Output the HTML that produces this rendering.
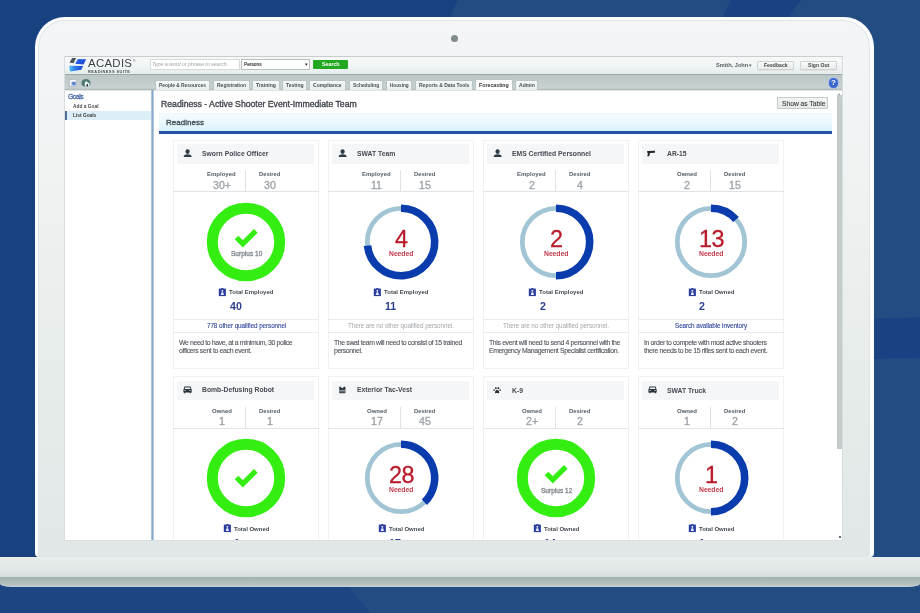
<!DOCTYPE html>
<html><head><meta charset="utf-8"><style>
html,body{margin:0;padding:0;}
body{width:920px;height:613px;position:relative;overflow:hidden;background:#17417f;font-family:"Liberation Sans",sans-serif;}
.r{position:absolute;}
.t{position:absolute;white-space:nowrap;line-height:20px;will-change:transform;}
svg{display:block;}
</style></head><body>
<svg class="r" style="left:0;top:0" width="920" height="613" viewBox="0 0 920 613">
<rect width="920" height="613" fill="#17417f"/>
<polygon points="458,0 920,0 920,613 360,613 330,560 450,17" fill="#234c83"/>
<polygon points="731,0 801,0 789,17 723,17" fill="#1a4282"/>
<polygon points="873,319 920,317 920,358 873,359" fill="#1a4282"/>
<polygon points="0,587 349,587 370,613 0,613" fill="#1c4582"/>
</svg>
<div class="r" style="left:35px;top:16.5px;width:838.8px;height:540.5px;border-radius:30px 30px 4px 4px;background:#fbfdfe;"></div>
<div class="r" style="left:38.2px;top:19.5px;width:832.2px;height:537.5px;border-radius:27px 27px 2px 2px;background:#e0e5e5;"></div>
<div class="r" style="left:39.4px;top:20.6px;width:829.8px;height:536.4px;border-radius:26px 26px 2px 2px;background:linear-gradient(#f3f5f6,#f1f4f4 18%,#e9eeec 55%,#e3e9e8 88%,#e1e7e6);"></div>
<div class="r" style="left:450.8px;top:34.7px;width:7.2px;height:7.2px;border-radius:50%;background:#7f8b8c;"></div>
<div class="r" style="left:0;top:557px;width:920px;height:30px;border-radius:0 0 12px 12px / 0 0 3px 3px;background:linear-gradient(#e8edec,#e0e6e5 45%,#d4dbda 66%,#a3b1b0 67%,#b6c3c3 92%,#c6d2d5 100%);"></div>
<div class="r" style="left:63.5px;top:55.5px;width:779.3px;height:485.29999999999995px;background:#d8dddd;"></div>
<div class="r" style="left:64.5px;top:56px;width:777.5px;height:484px;background:#ffffff;"></div>
<div class="r" style="left:64.5px;top:56px;width:777.5px;height:18px;background:linear-gradient(#f6f8f8,#f2f5f6 50%,#e5ebeb);border-top:1px solid #c9cdcd;box-sizing:border-box;"></div>
<div class="r" style="left:64.5px;top:74px;width:777.5px;height:15.700000000000003px;background:linear-gradient(#9ca8a8 0px,#9ca8a8 0.9px,#bcc7c7 1.4px,#c3cdcd 55%,#c9d2d2 90%,#b2bcbc 92%,#b2bcbc 100%);"></div>
<div class="r" style="left:64.5px;top:89.7px;width:777.5px;height:0.7999999999999972px;background:#dfe5e5;"></div>
<svg class="r" style="left:64px;top:55px" width="30" height="20" viewBox="0 0 30 20">
<defs><linearGradient id="lg1" x1="0" y1="0" x2="1" y2="1"><stop offset="0" stop-color="#2f6cf0"/><stop offset="1" stop-color="#1840c8"/></linearGradient>
<linearGradient id="lg2" x1="0" y1="0" x2="1" y2="0"><stop offset="0" stop-color="#5cc8f2"/><stop offset="0.45" stop-color="#2f78e6"/><stop offset="1" stop-color="#1a48d0"/></linearGradient></defs>
<polygon points="5.5,7.5 8.2,2.9 12.1,3.1 9.5,8.2" fill="#4c5558"/>
<polygon points="11.1,8.8 14,3.9 22.2,4.2 19.6,9.5" fill="url(#lg1)"/>
<path d="M5.2,11.6 Q4.6,11 5.6,10.8 L19.2,11.1 L17.3,14.7 L6.8,16.6 Q6.2,16.7 5.9,16 Z" fill="url(#lg2)"/>
</svg>
<div class="t" style="left:88.10px;top:53.40px;font-size:11.4px;color:#3d4348;letter-spacing:0.311px;">ACADIS</div>
<div class="t" style="left:133.00px;top:50.50px;font-size:3.5px;color:#555;letter-spacing:0.000px;">®</div>
<div class="t" style="left:87.70px;top:62.00px;font-size:3.9px;color:#4a5056;letter-spacing:0.477px;font-weight:bold;">READINESS SUITE</div>
<div class="r" style="left:149.5px;top:58.5px;width:90.0px;height:11.0px;background:#ffffff;border:1px solid #d6dada;box-sizing:border-box;"></div>
<div class="t" style="left:151.50px;top:54.15px;font-size:5.6px;color:#a6abab;letter-spacing:-0.173px;font-style:italic;">Type a word or phrase to search</div>
<div class="r" style="left:241.3px;top:59px;width:68.69999999999999px;height:10.5px;background:#ffffff;border:1px solid #b9bdbd;box-sizing:border-box;"></div>
<div class="t" style="left:244.10px;top:55.40px;font-size:4.8px;color:#4a4a4a;letter-spacing:-0.002px;-webkit-text-stroke:0.2px #4a4a4a;">Persons</div>
<div class="t" style="left:303.60px;top:55.22px;font-size:4.5px;color:#333;letter-spacing:0.000px;">▼</div>
<div class="r" style="left:313px;top:59.8px;width:35px;height:9.0px;background:#22a822;border-radius:1px;"></div>
<div class="t" style="left:321.70px;top:54.30px;font-size:5.3px;color:#ffffff;letter-spacing:-0.016px;font-weight:bold;">Search</div>
<div class="t" style="left:715.80px;top:55.00px;font-size:5.6px;color:#555a5e;letter-spacing:0.016px;font-weight:bold;">Smith, John</div>
<div class="t" style="left:749.00px;top:55.30px;font-size:5px;color:#666;letter-spacing:0.000px;">▾</div>
<div class="r" style="left:757.2px;top:60.8px;width:37.299999999999955px;height:8.799999999999997px;background:linear-gradient(#f9fafa,#e8ebeb);border:1px solid #cfd3d3;box-sizing:border-box;border-radius:1px;box-shadow:0 0.5px 0.5px #d0d4d4;"></div>
<div class="t" style="left:764.00px;top:55.29px;font-size:5.1px;color:#444;letter-spacing:0.010px;font-weight:bold;">Feedback</div>
<div class="r" style="left:800.3px;top:60.8px;width:36.5px;height:8.799999999999997px;background:linear-gradient(#f9fafa,#e8ebeb);border:1px solid #cfd3d3;box-sizing:border-box;border-radius:1px;box-shadow:0 0.5px 0.5px #d0d4d4;"></div>
<div class="t" style="left:808.20px;top:55.37px;font-size:5.1px;color:#444;letter-spacing:0.008px;font-weight:bold;">Sign Out</div>
<svg class="r" style="left:64px;top:74px" width="30" height="16" viewBox="64 74 30 16">
<rect x="69.1" y="79.1" width="7.8" height="7.8" fill="#aab2b4"/>
<rect x="69.8" y="79.8" width="6.4" height="6.4" fill="#f8fafb"/>
<rect x="71.4" y="81.6" width="4.7" height="4" fill="#8eb0e4"/>
<rect x="72.6" y="82.5" width="2.2" height="2.2" fill="#3f66b4"/>
<path d="M81.6,84.6 C81,81.5 82.5,79.2 85.5,78.9 C87.6,78.8 89.2,79.6 90.2,81 L90.5,84.5 L88.8,86.6 L83.6,86.6 Z" fill="#4f7a72"/>
<path d="M85.8,81.1 L89.6,83.6 L89.4,86.6 L85,86.6 L84.6,83.4 Z" fill="#e8f4f2"/>
<ellipse cx="87.3" cy="85.3" rx="0.8" ry="1.2" fill="#1e2a2a"/>
</svg>
<div class="r" style="left:155.2px;top:80.2px;width:55.0px;height:9.399999999999991px;background:linear-gradient(#f7f9f9,#e9eded);border:1px solid #bcc5c5;border-bottom:none;box-sizing:border-box;border-radius:2px 2px 0 0;"></div>
<div class="t" style="left:159.20px;top:76.01px;font-size:4.9px;color:#4a4f52;letter-spacing:-0.023px;font-weight:bold;">People & Resources</div>
<div class="r" style="left:212.5px;top:80.2px;width:37.099999999999994px;height:9.399999999999991px;background:linear-gradient(#f7f9f9,#e9eded);border:1px solid #bcc5c5;border-bottom:none;box-sizing:border-box;border-radius:2px 2px 0 0;"></div>
<div class="t" style="left:216.50px;top:74.98px;font-size:5.0px;color:#4a4f52;letter-spacing:-0.006px;font-weight:bold;">Registration</div>
<div class="r" style="left:252px;top:80.2px;width:28px;height:9.399999999999991px;background:linear-gradient(#f7f9f9,#e9eded);border:1px solid #bcc5c5;border-bottom:none;box-sizing:border-box;border-radius:2px 2px 0 0;"></div>
<div class="t" style="left:256.00px;top:74.99px;font-size:5.1px;color:#4a4f52;letter-spacing:0.024px;font-weight:bold;">Training</div>
<div class="r" style="left:281.9px;top:80.2px;width:25.600000000000023px;height:9.399999999999991px;background:linear-gradient(#f7f9f9,#e9eded);border:1px solid #bcc5c5;border-bottom:none;box-sizing:border-box;border-radius:2px 2px 0 0;"></div>
<div class="t" style="left:285.90px;top:75.00px;font-size:5.1px;color:#4a4f52;letter-spacing:-0.026px;font-weight:bold;">Testing</div>
<div class="r" style="left:309px;top:80.2px;width:36.69999999999999px;height:9.399999999999991px;background:linear-gradient(#f7f9f9,#e9eded);border:1px solid #bcc5c5;border-bottom:none;box-sizing:border-box;border-radius:2px 2px 0 0;"></div>
<div class="t" style="left:313.00px;top:74.98px;font-size:5.1px;color:#4a4f52;letter-spacing:-0.023px;font-weight:bold;">Compliance</div>
<div class="r" style="left:348.9px;top:80.2px;width:34.10000000000002px;height:9.399999999999991px;background:linear-gradient(#f7f9f9,#e9eded);border:1px solid #bcc5c5;border-bottom:none;box-sizing:border-box;border-radius:2px 2px 0 0;"></div>
<div class="t" style="left:352.90px;top:76.00px;font-size:4.8px;color:#4a4f52;letter-spacing:0.026px;font-weight:bold;">Scheduling</div>
<div class="r" style="left:385.5px;top:80.2px;width:26.69999999999999px;height:9.399999999999991px;background:linear-gradient(#f7f9f9,#e9eded);border:1px solid #bcc5c5;border-bottom:none;box-sizing:border-box;border-radius:2px 2px 0 0;"></div>
<div class="t" style="left:389.50px;top:76.03px;font-size:4.7px;color:#4a4f52;letter-spacing:-0.016px;font-weight:bold;">Housing</div>
<div class="r" style="left:414.9px;top:80.2px;width:58.400000000000034px;height:9.399999999999991px;background:linear-gradient(#f7f9f9,#e9eded);border:1px solid #bcc5c5;border-bottom:none;box-sizing:border-box;border-radius:2px 2px 0 0;"></div>
<div class="t" style="left:418.90px;top:75.03px;font-size:5.0px;color:#4a4f52;letter-spacing:-0.004px;font-weight:bold;">Reports & Data Tools</div>
<div class="r" style="left:475.4px;top:79px;width:37.80000000000007px;height:10.599999999999994px;background:#ffffff;border:1px solid #bcc5c5;border-bottom:none;box-sizing:border-box;border-radius:2px 2px 0 0;"></div>
<div class="t" style="left:479.40px;top:74.96px;font-size:5.3px;color:#333;letter-spacing:-0.024px;font-weight:bold;">Forecasting</div>
<div class="r" style="left:514.5px;top:80.2px;width:23.799999999999955px;height:9.399999999999991px;background:linear-gradient(#f7f9f9,#e9eded);border:1px solid #bcc5c5;border-bottom:none;box-sizing:border-box;border-radius:2px 2px 0 0;"></div>
<div class="t" style="left:518.50px;top:75.03px;font-size:5.1px;color:#4a4f52;letter-spacing:-0.016px;font-weight:bold;">Admin</div>
<div class="r" style="left:828.6px;top:77.9px;width:9.8px;height:9.8px;border-radius:50%;background:#3a68d0;box-shadow:0 0 0 0.8px #a9bde8;"></div>
<div class="t" style="left:831.06px;top:73.30px;font-size:8px;color:#ffffff;letter-spacing:0.000px;font-weight:bold;">?</div>
<div class="r" style="left:150.8px;top:89.5px;width:3.0px;height:450.5px;background:linear-gradient(90deg,#c4d6e6,#86a6c8 45%,#9bb7d4 70%,#d2e0ec);"></div>
<div class="t" style="left:68.00px;top:86.56px;font-size:6.8px;color:#4a6aa8;letter-spacing:-0.516px;-webkit-text-stroke:0.3px #4a6aa8;">Goals</div>
<div class="t" style="left:72.90px;top:96.98px;font-size:4.8px;color:#4a4a4a;letter-spacing:0.018px;font-weight:bold;">Add a Goal</div>
<div class="r" style="left:64.5px;top:110.8px;width:86.5px;height:8.900000000000006px;background:#dceef8;"></div>
<div class="r" style="left:64.8px;top:110.8px;width:2.1000000000000085px;height:8.900000000000006px;background:#4f6e9c;"></div>
<div class="t" style="left:72.90px;top:105.96px;font-size:4.8px;color:#3a3a3a;letter-spacing:0.010px;font-weight:bold;">List Goals</div>
<div class="t" style="left:161.40px;top:93.94px;font-size:8.7px;color:#42474d;letter-spacing:-0.014px;-webkit-text-stroke:0.35px #42474d;">Readiness - Active Shooter Event-Immediate Team</div>
<div class="r" style="left:777.1px;top:97.3px;width:51.39999999999998px;height:11.700000000000003px;background:linear-gradient(#f2f4f4,#e4e8e8);border:1px solid #c5caca;box-sizing:border-box;"></div>
<div class="t" style="left:781.50px;top:94.05px;font-size:6.7px;color:#3a3a3a;letter-spacing:0.004px;-webkit-text-stroke:0.1px #3a3a3a;">Show as Table</div>
<div class="r" style="left:158.7px;top:113px;width:673.3px;height:18.19999999999999px;background:linear-gradient(#eaf0f2,#f3fbfd 6%,#ebf8fc 50%,#d9f2fb 100%);"></div>
<div class="r" style="left:158.7px;top:131.1px;width:673.3px;height:2.5999999999999943px;background:#2552aa;"></div>
<div class="t" style="left:165.70px;top:112.69px;font-size:8.0px;color:#48525c;letter-spacing:0.025px;-webkit-text-stroke:0.35px #48525c;">Readiness</div>
<div class="r" style="left:837.3px;top:95.3px;width:4.5px;height:353.4px;background:#c3cbcb;"></div>
<div class="r" style="left:838.8px;top:536px;width:1.8000000000000682px;height:1.7999999999999545px;background:#667;"></div>
<div class="t" style="left:838.19px;top:83.50px;font-size:3.5px;color:#888;letter-spacing:0.000px;">▴</div>
<div class="r" style="left:0;top:0;width:920px;height:540px;overflow:hidden;"><div class="r" style="left:173px;top:140.0px;width:145.5px;height:228.5px;background:#ffffff;border:1px solid #eff1f3;box-sizing:border-box;"></div>
<div class="r" style="left:177px;top:144.0px;width:137px;height:19.5px;background:#f4f6f8;"></div>
<div class="r" style="left:182.5px;top:149.4px"><svg width="10" height="10" viewBox="0 0 10 10"><ellipse cx="4.6" cy="2.6" rx="2.1" ry="2.4" fill="#2e3b44"/><path d="M0.6,8.1 C0.6,5.8 2.6,5.3 4.6,5.2 C6.6,5.3 8.7,5.8 8.7,8.1 Z" fill="#2e3b44"/></svg></div>
<div class="t" style="left:201.80px;top:143.83px;font-size:6.8px;color:#454b52;letter-spacing:0.000px;font-weight:bold;">Sworn Police Officer</div>
<div class="t" style="left:207.16px;top:163.92px;font-size:6.0px;color:#535c66;letter-spacing:0.000px;font-weight:bold;">Employed</div>
<div class="t" style="left:259.20px;top:163.94px;font-size:5.8px;color:#535c66;letter-spacing:-0.013px;font-weight:bold;">Desired</div>
<div class="t" style="left:212.81px;top:174.80px;font-size:10.6px;color:#a0a5a9;letter-spacing:0.000px;-webkit-text-stroke:0.35px #a0a5a9;">30+</div>
<div class="t" style="left:263.90px;top:174.80px;font-size:10.6px;color:#a0a5a9;letter-spacing:0.000px;-webkit-text-stroke:0.35px #a0a5a9;">30</div>
<div class="r" style="left:245px;top:170.0px;width:1px;height:21.5px;background:#dfe3e6;"></div>
<div class="r" style="left:173px;top:191.0px;width:145.5px;height:1.1999999999999886px;background:#e0e4e7;"></div>
<svg class="r" style="left:204.2px;top:199.5px" width="84" height="84" viewBox="-42 -42 84 84"><circle r="33.7" fill="none" stroke="#34ee12" stroke-width="11"/><path d="M-9.5,-4.5 L-3.2,1.7999999999999998 L9.8,-11.2" fill="none" stroke="#34ee12" stroke-width="5.2"/></svg>
<div class="t" style="left:230.55px;top:244.27px;font-size:6.5px;color:#80878e;letter-spacing:0.025px;-webkit-text-stroke:0.3px #80878e;">Surplus 10</div>
<div class="r" style="left:218.45px;top:287.8px"><svg width="9" height="9" viewBox="0 0 9 9"><rect x="0.8" y="0.6" width="7.1" height="7.5" fill="#2b3d9e"/><rect x="3.3" y="0" width="2.1" height="1.2" fill="#2b3d9e"/><ellipse cx="4.35" cy="2.8" rx="0.9" ry="1.1" fill="#e3e8ff"/><path d="M2.7,6.9 L3.5,4.3 L5.2,4.3 L6,6.9 Z" fill="#e3e8ff"/></svg></div>
<div class="t" style="left:229.45px;top:282.23px;font-size:6.0px;color:#444a50;letter-spacing:0.021px;font-weight:bold;">Total Employed</div>
<div class="t" style="left:229.65px;top:296.14px;font-size:10.6px;color:#2c3f8e;letter-spacing:0.000px;font-weight:bold;">40</div>
<div class="r" style="left:173px;top:318.6px;width:145.5px;height:1.099999999999966px;background:#e9ecee;"></div>
<div class="t" style="left:206.54px;top:316.04px;font-size:6.3px;color:#34489e;letter-spacing:-0.069px;-webkit-text-stroke:0.12px #34489e;">778 other qualified personnel</div>
<div class="r" style="left:173px;top:331.8px;width:145.5px;height:1.099999999999966px;background:#e9ecee;"></div>
<div class="t" style="left:178.50px;top:333.38px;font-size:6.9px;color:#4e5359;letter-spacing:-0.383px;-webkit-text-stroke:0.1px #4e5359;">We need to have, at a minimum, 30 police</div>
<div class="t" style="left:178.50px;top:341.41px;font-size:6.9px;color:#4e5359;letter-spacing:-0.354px;-webkit-text-stroke:0.1px #4e5359;">officers sent to each event.</div>
<div class="r" style="left:328px;top:140.0px;width:145.5px;height:228.5px;background:#ffffff;border:1px solid #eff1f3;box-sizing:border-box;"></div>
<div class="r" style="left:332px;top:144.0px;width:137px;height:19.5px;background:#f4f6f8;"></div>
<div class="r" style="left:337.5px;top:149.4px"><svg width="10" height="10" viewBox="0 0 10 10"><ellipse cx="4.6" cy="2.6" rx="2.1" ry="2.4" fill="#2e3b44"/><path d="M0.6,8.1 C0.6,5.8 2.6,5.3 4.6,5.2 C6.6,5.3 8.7,5.8 8.7,8.1 Z" fill="#2e3b44"/></svg></div>
<div class="t" style="left:356.80px;top:144.15px;font-size:6.8px;color:#454b52;letter-spacing:0.000px;font-weight:bold;">SWAT Team</div>
<div class="t" style="left:362.16px;top:163.92px;font-size:6.0px;color:#535c66;letter-spacing:0.000px;font-weight:bold;">Employed</div>
<div class="t" style="left:414.20px;top:163.94px;font-size:5.8px;color:#535c66;letter-spacing:-0.013px;font-weight:bold;">Desired</div>
<div class="t" style="left:371.30px;top:174.80px;font-size:10.6px;color:#a0a5a9;letter-spacing:0.000px;-webkit-text-stroke:0.35px #a0a5a9;">11</div>
<div class="t" style="left:418.90px;top:174.80px;font-size:10.6px;color:#a0a5a9;letter-spacing:0.000px;-webkit-text-stroke:0.35px #a0a5a9;">15</div>
<div class="r" style="left:400px;top:170.0px;width:1px;height:21.5px;background:#dfe3e6;"></div>
<div class="r" style="left:328px;top:191.0px;width:145.5px;height:1.1999999999999886px;background:#e0e4e7;"></div>
<svg class="r" style="left:359.2px;top:199.5px" width="84" height="84" viewBox="-42 -42 84 84"><circle r="33.7" fill="none" stroke="#a2c5d6" stroke-width="4.8"/><path d="M0,-33.7 A33.7,33.7 0 1 1 -33.515,3.523" fill="none" stroke="#0a3cae" stroke-width="7.6"/></svg>
<div class="t" style="left:394.69px;top:228.67px;font-size:23.4px;color:#b81c2c;letter-spacing:0.000px;-webkit-text-stroke:0.3px #b81c2c;">4</div>
<div class="t" style="left:389.00px;top:243.83px;font-size:6.8px;color:#c03848;letter-spacing:-0.033px;font-weight:bold;">Needed</div>
<div class="r" style="left:373.45px;top:287.8px"><svg width="9" height="9" viewBox="0 0 9 9"><rect x="0.8" y="0.6" width="7.1" height="7.5" fill="#2b3d9e"/><rect x="3.3" y="0" width="2.1" height="1.2" fill="#2b3d9e"/><ellipse cx="4.35" cy="2.8" rx="0.9" ry="1.1" fill="#e3e8ff"/><path d="M2.7,6.9 L3.5,4.3 L5.2,4.3 L6,6.9 Z" fill="#e3e8ff"/></svg></div>
<div class="t" style="left:384.45px;top:282.23px;font-size:6.0px;color:#444a50;letter-spacing:0.021px;font-weight:bold;">Total Employed</div>
<div class="t" style="left:384.65px;top:296.14px;font-size:10.6px;color:#2c3f8e;letter-spacing:0.000px;font-weight:bold;">11</div>
<div class="r" style="left:328px;top:318.6px;width:145.5px;height:1.099999999999966px;background:#e9ecee;"></div>
<div class="t" style="left:348.21px;top:315.99px;font-size:6.3px;color:#a3a7ab;letter-spacing:-0.068px;">There are no other qualified personnel.</div>
<div class="r" style="left:328px;top:331.8px;width:145.5px;height:1.099999999999966px;background:#e9ecee;"></div>
<div class="t" style="left:333.50px;top:333.36px;font-size:6.9px;color:#4e5359;letter-spacing:-0.359px;-webkit-text-stroke:0.1px #4e5359;">The swat team will need to consist of 15 trained</div>
<div class="t" style="left:333.50px;top:341.41px;font-size:6.9px;color:#4e5359;letter-spacing:-0.415px;-webkit-text-stroke:0.1px #4e5359;">personnel.</div>
<div class="r" style="left:483px;top:140.0px;width:145.5px;height:228.5px;background:#ffffff;border:1px solid #eff1f3;box-sizing:border-box;"></div>
<div class="r" style="left:487px;top:144.0px;width:137px;height:19.5px;background:#f4f6f8;"></div>
<div class="r" style="left:492.5px;top:149.4px"><svg width="10" height="10" viewBox="0 0 10 10"><ellipse cx="4.6" cy="2.6" rx="2.1" ry="2.4" fill="#2e3b44"/><path d="M0.6,8.1 C0.6,5.8 2.6,5.3 4.6,5.2 C6.6,5.3 8.7,5.8 8.7,8.1 Z" fill="#2e3b44"/></svg></div>
<div class="t" style="left:511.80px;top:143.88px;font-size:6.8px;color:#454b52;letter-spacing:0.000px;font-weight:bold;">EMS Certified Personnel</div>
<div class="t" style="left:517.16px;top:163.92px;font-size:6.0px;color:#535c66;letter-spacing:0.000px;font-weight:bold;">Employed</div>
<div class="t" style="left:569.20px;top:163.94px;font-size:5.8px;color:#535c66;letter-spacing:-0.013px;font-weight:bold;">Desired</div>
<div class="t" style="left:528.85px;top:174.80px;font-size:10.6px;color:#a0a5a9;letter-spacing:0.000px;-webkit-text-stroke:0.35px #a0a5a9;">2</div>
<div class="t" style="left:576.85px;top:174.80px;font-size:10.6px;color:#a0a5a9;letter-spacing:0.000px;-webkit-text-stroke:0.35px #a0a5a9;">4</div>
<div class="r" style="left:555px;top:170.0px;width:1px;height:21.5px;background:#dfe3e6;"></div>
<div class="r" style="left:483px;top:191.0px;width:145.5px;height:1.1999999999999886px;background:#e0e4e7;"></div>
<svg class="r" style="left:514.2px;top:199.5px" width="84" height="84" viewBox="-42 -42 84 84"><circle r="33.7" fill="none" stroke="#a2c5d6" stroke-width="4.8"/><path d="M0,-33.7 A33.7,33.7 0 0 1 0.000,33.700" fill="none" stroke="#0a3cae" stroke-width="7.6"/></svg>
<div class="t" style="left:549.69px;top:228.67px;font-size:23.4px;color:#b81c2c;letter-spacing:0.000px;-webkit-text-stroke:0.3px #b81c2c;">2</div>
<div class="t" style="left:544.00px;top:243.83px;font-size:6.8px;color:#c03848;letter-spacing:-0.033px;font-weight:bold;">Needed</div>
<div class="r" style="left:528.45px;top:287.8px"><svg width="9" height="9" viewBox="0 0 9 9"><rect x="0.8" y="0.6" width="7.1" height="7.5" fill="#2b3d9e"/><rect x="3.3" y="0" width="2.1" height="1.2" fill="#2b3d9e"/><ellipse cx="4.35" cy="2.8" rx="0.9" ry="1.1" fill="#e3e8ff"/><path d="M2.7,6.9 L3.5,4.3 L5.2,4.3 L6,6.9 Z" fill="#e3e8ff"/></svg></div>
<div class="t" style="left:539.45px;top:282.23px;font-size:6.0px;color:#444a50;letter-spacing:0.021px;font-weight:bold;">Total Employed</div>
<div class="t" style="left:539.65px;top:296.14px;font-size:10.6px;color:#2c3f8e;letter-spacing:0.000px;font-weight:bold;">2</div>
<div class="r" style="left:483px;top:318.6px;width:145.5px;height:1.099999999999966px;background:#e9ecee;"></div>
<div class="t" style="left:503.21px;top:315.99px;font-size:6.3px;color:#a3a7ab;letter-spacing:-0.068px;">There are no other qualified personnel.</div>
<div class="r" style="left:483px;top:331.8px;width:145.5px;height:1.099999999999966px;background:#e9ecee;"></div>
<div class="t" style="left:488.50px;top:333.34px;font-size:6.9px;color:#4e5359;letter-spacing:-0.359px;-webkit-text-stroke:0.1px #4e5359;">This event will need to send 4 personnel with the</div>
<div class="t" style="left:488.50px;top:341.46px;font-size:6.9px;color:#4e5359;letter-spacing:-0.379px;-webkit-text-stroke:0.1px #4e5359;">Emergency Management Specialist certification.</div>
<div class="r" style="left:638px;top:140.0px;width:145.5px;height:228.5px;background:#ffffff;border:1px solid #eff1f3;box-sizing:border-box;"></div>
<div class="r" style="left:642px;top:144.0px;width:137px;height:19.5px;background:#f4f6f8;"></div>
<div class="r" style="left:646.5px;top:149.4px"><svg width="10" height="10" viewBox="0 0 10 10"><path d="M0.2,2 L8,1.7 L8,3.8 L3,3.9 L2.3,7.3 L0.3,7.3 L0.9,3.9 L0.2,3.7 Z" fill="#22282c"/></svg></div>
<div class="t" style="left:666.80px;top:144.40px;font-size:6.8px;color:#454b52;letter-spacing:0.000px;font-weight:bold;">AR-15</div>
<div class="t" style="left:676.50px;top:163.96px;font-size:6.0px;color:#535c66;letter-spacing:0.000px;font-weight:bold;">Owned</div>
<div class="t" style="left:724.20px;top:163.94px;font-size:5.8px;color:#535c66;letter-spacing:-0.013px;font-weight:bold;">Desired</div>
<div class="t" style="left:683.85px;top:174.80px;font-size:10.6px;color:#a0a5a9;letter-spacing:0.000px;-webkit-text-stroke:0.35px #a0a5a9;">2</div>
<div class="t" style="left:728.90px;top:174.80px;font-size:10.6px;color:#a0a5a9;letter-spacing:0.000px;-webkit-text-stroke:0.35px #a0a5a9;">15</div>
<div class="r" style="left:710px;top:170.0px;width:1px;height:21.5px;background:#dfe3e6;"></div>
<div class="r" style="left:638px;top:191.0px;width:145.5px;height:1.1999999999999886px;background:#e0e4e7;"></div>
<svg class="r" style="left:669.2px;top:199.5px" width="84" height="84" viewBox="-42 -42 84 84"><circle r="33.7" fill="none" stroke="#a2c5d6" stroke-width="4.8"/><path d="M0,-33.7 A33.7,33.7 0 0 1 25.044,-22.550" fill="none" stroke="#0a3cae" stroke-width="7.6"/></svg>
<div class="t" style="left:698.50px;top:228.67px;font-size:23.4px;color:#b81c2c;letter-spacing:-0.629px;-webkit-text-stroke:0.3px #b81c2c;">13</div>
<div class="t" style="left:699.00px;top:243.83px;font-size:6.8px;color:#c03848;letter-spacing:-0.033px;font-weight:bold;">Needed</div>
<div class="r" style="left:688.00px;top:287.8px"><svg width="9" height="9" viewBox="0 0 9 9"><rect x="0.8" y="0.6" width="7.1" height="7.5" fill="#2b3d9e"/><rect x="3.3" y="0" width="2.1" height="1.2" fill="#2b3d9e"/><ellipse cx="4.35" cy="2.8" rx="0.9" ry="1.1" fill="#e3e8ff"/><path d="M2.7,6.9 L3.5,4.3 L5.2,4.3 L6,6.9 Z" fill="#e3e8ff"/></svg></div>
<div class="t" style="left:699.00px;top:282.26px;font-size:6.0px;color:#444a50;letter-spacing:-0.016px;font-weight:bold;">Total Owned</div>
<div class="t" style="left:699.20px;top:296.14px;font-size:10.6px;color:#2c3f8e;letter-spacing:0.000px;font-weight:bold;">2</div>
<div class="r" style="left:638px;top:318.6px;width:145.5px;height:1.099999999999966px;background:#e9ecee;"></div>
<div class="t" style="left:675.13px;top:316.00px;font-size:6.3px;color:#34489e;letter-spacing:-0.070px;-webkit-text-stroke:0.12px #34489e;">Search available inventory</div>
<div class="r" style="left:638px;top:331.8px;width:145.5px;height:1.099999999999966px;background:#e9ecee;"></div>
<div class="t" style="left:643.50px;top:333.33px;font-size:6.9px;color:#4e5359;letter-spacing:-0.367px;-webkit-text-stroke:0.1px #4e5359;">In order to compete with most active shooters</div>
<div class="t" style="left:643.50px;top:341.45px;font-size:6.9px;color:#4e5359;letter-spacing:-0.353px;-webkit-text-stroke:0.1px #4e5359;">there needs to be 15 rifles sent to each event.</div>
<div class="r" style="left:173px;top:375.8px;width:145.5px;height:229.3px;background:#ffffff;border:1px solid #eff1f3;box-sizing:border-box;"></div>
<div class="r" style="left:177px;top:380.6px;width:137px;height:19.5px;background:#f4f6f8;"></div>
<div class="r" style="left:182.5px;top:386.40000000000003px"><svg width="10" height="10" viewBox="0 0 10 10"><path fill-rule="evenodd" fill="#2a3238" d="M1.4,0.5 L7.6,0.5 L8.4,3.2 L8.7,3.6 L8.7,6.4 L7.9,6.4 L7.9,7.2 L6.7,7.2 L6.7,6.4 L2.4,6.4 L2.4,7.2 L1.2,7.2 L1.2,6.4 L0.4,6.4 L0.4,3.6 L0.7,3.2 Z M2.1,1.5 L7,1.5 L7.4,3 L1.7,3 Z M1.6,4.1 L2.6,4.1 L2.6,5.1 L1.6,5.1 Z M6.5,4.1 L7.5,4.1 L7.5,5.1 L6.5,5.1 Z"/></svg></div>
<div class="t" style="left:201.80px;top:380.44px;font-size:6.8px;color:#454b52;letter-spacing:0.000px;font-weight:bold;">Bomb-Defusing Robot</div>
<div class="t" style="left:211.50px;top:400.56px;font-size:6.0px;color:#535c66;letter-spacing:0.000px;font-weight:bold;">Owned</div>
<div class="t" style="left:259.20px;top:400.54px;font-size:5.8px;color:#535c66;letter-spacing:-0.013px;font-weight:bold;">Desired</div>
<div class="t" style="left:218.85px;top:411.40px;font-size:10.6px;color:#a0a5a9;letter-spacing:0.000px;-webkit-text-stroke:0.35px #a0a5a9;">1</div>
<div class="t" style="left:266.85px;top:411.40px;font-size:10.6px;color:#a0a5a9;letter-spacing:0.000px;-webkit-text-stroke:0.35px #a0a5a9;">1</div>
<div class="r" style="left:245px;top:406.6px;width:1px;height:21.5px;background:#dfe3e6;"></div>
<div class="r" style="left:173px;top:427.6px;width:145.5px;height:1.1999999999999886px;background:#e0e4e7;"></div>
<svg class="r" style="left:204.2px;top:436.1px" width="84" height="84" viewBox="-42 -42 84 84"><circle r="33.7" fill="none" stroke="#34ee12" stroke-width="11"/><path d="M-9.5,-0.5 L-3.2,5.8 L9.8,-7.2" fill="none" stroke="#34ee12" stroke-width="5.2"/></svg>
<div class="r" style="left:223.00px;top:524.4000000000001px"><svg width="9" height="9" viewBox="0 0 9 9"><rect x="0.8" y="0.6" width="7.1" height="7.5" fill="#2b3d9e"/><rect x="3.3" y="0" width="2.1" height="1.2" fill="#2b3d9e"/><ellipse cx="4.35" cy="2.8" rx="0.9" ry="1.1" fill="#e3e8ff"/><path d="M2.7,6.9 L3.5,4.3 L5.2,4.3 L6,6.9 Z" fill="#e3e8ff"/></svg></div>
<div class="t" style="left:234.00px;top:518.86px;font-size:6.0px;color:#444a50;letter-spacing:-0.016px;font-weight:bold;">Total Owned</div>
<div class="t" style="left:234.20px;top:532.74px;font-size:10.6px;color:#2c3f8e;letter-spacing:0.000px;font-weight:bold;">1</div>
<div class="r" style="left:328px;top:375.8px;width:145.5px;height:229.3px;background:#ffffff;border:1px solid #eff1f3;box-sizing:border-box;"></div>
<div class="r" style="left:332px;top:380.6px;width:137px;height:19.5px;background:#f4f6f8;"></div>
<div class="r" style="left:337.5px;top:386.40000000000003px"><svg width="10" height="10" viewBox="0 0 10 10"><path d="M1.2,0.8 L2.9,0.8 C3.2,2.6 5.4,2.6 5.7,0.8 L7.4,0.8 L7.4,7.2 L1.2,7.2 Z" fill="#2a3238"/><rect x="1.2" y="3.9" width="6.2" height="0.8" fill="#b5c0c5"/><rect x="1.2" y="5.6" width="6.2" height="0.6" fill="#b5c0c5"/></svg></div>
<div class="t" style="left:356.80px;top:380.46px;font-size:6.8px;color:#454b52;letter-spacing:0.000px;font-weight:bold;">Exterior Tac-Vest</div>
<div class="t" style="left:366.50px;top:400.56px;font-size:6.0px;color:#535c66;letter-spacing:0.000px;font-weight:bold;">Owned</div>
<div class="t" style="left:414.20px;top:400.54px;font-size:5.8px;color:#535c66;letter-spacing:-0.013px;font-weight:bold;">Desired</div>
<div class="t" style="left:370.90px;top:411.40px;font-size:10.6px;color:#a0a5a9;letter-spacing:0.000px;-webkit-text-stroke:0.35px #a0a5a9;">17</div>
<div class="t" style="left:418.90px;top:411.40px;font-size:10.6px;color:#a0a5a9;letter-spacing:0.000px;-webkit-text-stroke:0.35px #a0a5a9;">45</div>
<div class="r" style="left:400px;top:406.6px;width:1px;height:21.5px;background:#dfe3e6;"></div>
<div class="r" style="left:328px;top:427.6px;width:145.5px;height:1.1999999999999886px;background:#e0e4e7;"></div>
<svg class="r" style="left:359.2px;top:436.1px" width="84" height="84" viewBox="-42 -42 84 84"><circle r="33.7" fill="none" stroke="#a2c5d6" stroke-width="4.8"/><path d="M0,-33.7 A33.7,33.7 0 0 1 23.410,24.242" fill="none" stroke="#0a3cae" stroke-width="7.6"/></svg>
<div class="t" style="left:388.50px;top:465.27px;font-size:23.4px;color:#b81c2c;letter-spacing:-0.629px;-webkit-text-stroke:0.3px #b81c2c;">28</div>
<div class="t" style="left:389.00px;top:480.43px;font-size:6.8px;color:#c03848;letter-spacing:-0.033px;font-weight:bold;">Needed</div>
<div class="r" style="left:378.00px;top:524.4000000000001px"><svg width="9" height="9" viewBox="0 0 9 9"><rect x="0.8" y="0.6" width="7.1" height="7.5" fill="#2b3d9e"/><rect x="3.3" y="0" width="2.1" height="1.2" fill="#2b3d9e"/><ellipse cx="4.35" cy="2.8" rx="0.9" ry="1.1" fill="#e3e8ff"/><path d="M2.7,6.9 L3.5,4.3 L5.2,4.3 L6,6.9 Z" fill="#e3e8ff"/></svg></div>
<div class="t" style="left:389.00px;top:518.86px;font-size:6.0px;color:#444a50;letter-spacing:-0.016px;font-weight:bold;">Total Owned</div>
<div class="t" style="left:389.20px;top:532.74px;font-size:10.6px;color:#2c3f8e;letter-spacing:0.000px;font-weight:bold;">17</div>
<div class="r" style="left:483px;top:375.8px;width:145.5px;height:229.3px;background:#ffffff;border:1px solid #eff1f3;box-sizing:border-box;"></div>
<div class="r" style="left:487px;top:380.6px;width:137px;height:19.5px;background:#f4f6f8;"></div>
<div class="r" style="left:492.5px;top:386.40000000000003px"><svg width="10" height="10" viewBox="0 0 10 10"><ellipse cx="2.9" cy="2.2" rx="0.85" ry="1.1" fill="#2a3238"/><ellipse cx="5.4" cy="2.2" rx="0.85" ry="1.1" fill="#2a3238"/><ellipse cx="1.1" cy="4.1" rx="0.75" ry="0.95" fill="#2a3238"/><ellipse cx="7.2" cy="4.1" rx="0.75" ry="0.95" fill="#2a3238"/><path d="M4.15,3.8 C5.6,3.8 6.5,6.2 6.2,6.9 C5.7,7.5 4.8,7.1 4.15,7.1 C3.5,7.1 2.6,7.5 2.1,6.9 C1.8,6.2 2.7,3.8 4.15,3.8 Z" fill="#2a3238"/></svg></div>
<div class="t" style="left:511.80px;top:381.00px;font-size:6.8px;color:#454b52;letter-spacing:0.000px;font-weight:bold;">K-9</div>
<div class="t" style="left:521.50px;top:400.56px;font-size:6.0px;color:#535c66;letter-spacing:0.000px;font-weight:bold;">Owned</div>
<div class="t" style="left:569.20px;top:400.54px;font-size:5.8px;color:#535c66;letter-spacing:-0.013px;font-weight:bold;">Desired</div>
<div class="t" style="left:525.76px;top:411.40px;font-size:10.6px;color:#a0a5a9;letter-spacing:0.000px;-webkit-text-stroke:0.35px #a0a5a9;">2+</div>
<div class="t" style="left:576.85px;top:411.40px;font-size:10.6px;color:#a0a5a9;letter-spacing:0.000px;-webkit-text-stroke:0.35px #a0a5a9;">2</div>
<div class="r" style="left:555px;top:406.6px;width:1px;height:21.5px;background:#dfe3e6;"></div>
<div class="r" style="left:483px;top:427.6px;width:145.5px;height:1.1999999999999886px;background:#e0e4e7;"></div>
<svg class="r" style="left:514.2px;top:436.1px" width="84" height="84" viewBox="-42 -42 84 84"><circle r="33.7" fill="none" stroke="#34ee12" stroke-width="11"/><path d="M-9.5,-4.5 L-3.2,1.7999999999999998 L9.8,-11.2" fill="none" stroke="#34ee12" stroke-width="5.2"/></svg>
<div class="t" style="left:540.55px;top:480.87px;font-size:6.5px;color:#80878e;letter-spacing:0.025px;-webkit-text-stroke:0.3px #80878e;">Surplus 12</div>
<div class="r" style="left:533.00px;top:524.4000000000001px"><svg width="9" height="9" viewBox="0 0 9 9"><rect x="0.8" y="0.6" width="7.1" height="7.5" fill="#2b3d9e"/><rect x="3.3" y="0" width="2.1" height="1.2" fill="#2b3d9e"/><ellipse cx="4.35" cy="2.8" rx="0.9" ry="1.1" fill="#e3e8ff"/><path d="M2.7,6.9 L3.5,4.3 L5.2,4.3 L6,6.9 Z" fill="#e3e8ff"/></svg></div>
<div class="t" style="left:544.00px;top:518.86px;font-size:6.0px;color:#444a50;letter-spacing:-0.016px;font-weight:bold;">Total Owned</div>
<div class="t" style="left:544.20px;top:532.74px;font-size:10.6px;color:#2c3f8e;letter-spacing:0.000px;font-weight:bold;">14</div>
<div class="r" style="left:638px;top:375.8px;width:145.5px;height:229.3px;background:#ffffff;border:1px solid #eff1f3;box-sizing:border-box;"></div>
<div class="r" style="left:642px;top:380.6px;width:137px;height:19.5px;background:#f4f6f8;"></div>
<div class="r" style="left:647.5px;top:386.40000000000003px"><svg width="10" height="10" viewBox="0 0 10 10"><path fill-rule="evenodd" fill="#2a3238" d="M1.4,0.5 L7.6,0.5 L8.4,3.2 L8.7,3.6 L8.7,6.4 L7.9,6.4 L7.9,7.2 L6.7,7.2 L6.7,6.4 L2.4,6.4 L2.4,7.2 L1.2,7.2 L1.2,6.4 L0.4,6.4 L0.4,3.6 L0.7,3.2 Z M2.1,1.5 L7,1.5 L7.4,3 L1.7,3 Z M1.6,4.1 L2.6,4.1 L2.6,5.1 L1.6,5.1 Z M6.5,4.1 L7.5,4.1 L7.5,5.1 L6.5,5.1 Z"/></svg></div>
<div class="t" style="left:666.80px;top:380.70px;font-size:6.8px;color:#454b52;letter-spacing:0.000px;font-weight:bold;">SWAT Truck</div>
<div class="t" style="left:676.50px;top:400.56px;font-size:6.0px;color:#535c66;letter-spacing:0.000px;font-weight:bold;">Owned</div>
<div class="t" style="left:724.20px;top:400.54px;font-size:5.8px;color:#535c66;letter-spacing:-0.013px;font-weight:bold;">Desired</div>
<div class="t" style="left:683.85px;top:411.40px;font-size:10.6px;color:#a0a5a9;letter-spacing:0.000px;-webkit-text-stroke:0.35px #a0a5a9;">1</div>
<div class="t" style="left:731.85px;top:411.40px;font-size:10.6px;color:#a0a5a9;letter-spacing:0.000px;-webkit-text-stroke:0.35px #a0a5a9;">2</div>
<div class="r" style="left:710px;top:406.6px;width:1px;height:21.5px;background:#dfe3e6;"></div>
<div class="r" style="left:638px;top:427.6px;width:145.5px;height:1.1999999999999886px;background:#e0e4e7;"></div>
<svg class="r" style="left:669.2px;top:436.1px" width="84" height="84" viewBox="-42 -42 84 84"><circle r="33.7" fill="none" stroke="#a2c5d6" stroke-width="4.8"/><path d="M0,-33.7 A33.7,33.7 0 0 1 0.000,33.700" fill="none" stroke="#0a3cae" stroke-width="7.6"/></svg>
<div class="t" style="left:704.69px;top:465.27px;font-size:23.4px;color:#b81c2c;letter-spacing:0.000px;-webkit-text-stroke:0.3px #b81c2c;">1</div>
<div class="t" style="left:699.00px;top:480.43px;font-size:6.8px;color:#c03848;letter-spacing:-0.033px;font-weight:bold;">Needed</div>
<div class="r" style="left:688.00px;top:524.4000000000001px"><svg width="9" height="9" viewBox="0 0 9 9"><rect x="0.8" y="0.6" width="7.1" height="7.5" fill="#2b3d9e"/><rect x="3.3" y="0" width="2.1" height="1.2" fill="#2b3d9e"/><ellipse cx="4.35" cy="2.8" rx="0.9" ry="1.1" fill="#e3e8ff"/><path d="M2.7,6.9 L3.5,4.3 L5.2,4.3 L6,6.9 Z" fill="#e3e8ff"/></svg></div>
<div class="t" style="left:699.00px;top:518.86px;font-size:6.0px;color:#444a50;letter-spacing:-0.016px;font-weight:bold;">Total Owned</div>
<div class="t" style="left:699.20px;top:532.74px;font-size:10.6px;color:#2c3f8e;letter-spacing:0.000px;font-weight:bold;">1</div></div>
</body></html>
